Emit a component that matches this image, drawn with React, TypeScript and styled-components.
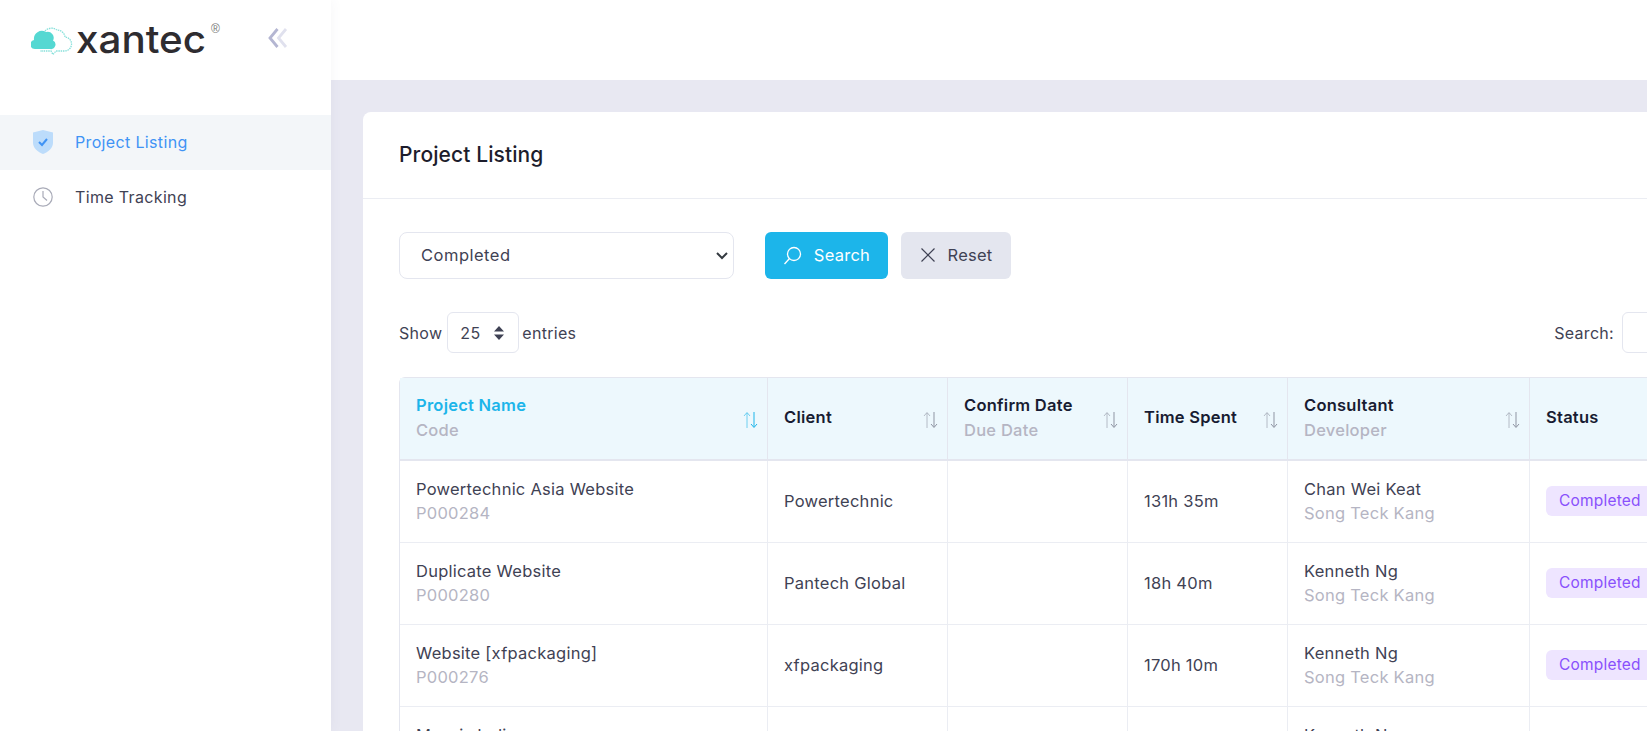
import React from "react";
import styled, { createGlobalStyle } from "styled-components";

const Global = createGlobalStyle`
  html, body { margin: 0; padding: 0; height: 100%; overflow: hidden; }
  body { font-family: Inter, "Liberation Sans", sans-serif; color: #3f4254; background: #e8e8f2; }
  * { box-sizing: border-box; }
`;

const Page = styled.div`display: flex; width: 1647px; height: 731px; overflow: hidden;`;
const Sidebar = styled.aside`flex: 0 0 331px; background: #fff; box-shadow: 0 0 12px rgba(80,80,120,.06); z-index: 1;`;
const Brand = styled.div`height: 115px; padding: 20px 0 0 31px; display: flex; align-items: flex-start;`;
const Collapse = styled.div`margin: 8px 0 0 42px; display: flex;`;
const NavItem = styled.div<{ $active?: boolean }>`
  height: 55px; display: flex; align-items: center; padding: 0 0 1px 33px; gap: 22px;
  background: ${p => (p.$active ? "#f3f6f9" : "transparent")};
  color: ${p => (p.$active ? "#3f93f5" : "#3f4254")};
  font-size: 16px; letter-spacing: .35px;
`;
const Main = styled.main`flex: 1; min-width: 0; display: flex; flex-direction: column;`;
const TopBar = styled.div`height: 80px; flex: none; background: #fff;`;
const Content = styled.div`padding: 32px 0 0 32px;`;
const Card = styled.section`width: 1500px; background: #fff; border-radius: 8px 0 0 0;`;
const CardHead = styled.div`height: 87px; display: flex; align-items: center; padding: 0 0 2px 36px; border-bottom: 1px solid #ebedf3; font-size: 21px; font-weight: 500; color: #1d1d2c; letter-spacing: .1px;`;
const CardBody = styled.div`padding: 33px 0 0 36px;`;
const Filters = styled.div`display: flex; align-items: flex-start; gap: 13px;`;
const SelectBox = styled.div`
  width: 335px; height: 47px; margin-right: 18px; border: 1px solid #e4e6ef; border-radius: 8px;
  display: flex; align-items: center; justify-content: space-between; padding: 0 3px 1px 21px; font-size: 16.5px; letter-spacing: .5px;
`;
const Btn = styled.div<{ $primary?: boolean; $w: number }>`
  width: ${p => p.$w}px; height: 47px; border-radius: 6px; display: flex; align-items: center; justify-content: center; gap: 12px;
  padding-bottom: 1px; font-size: 16.5px; letter-spacing: .25px; background: ${p => (p.$primary ? "#1cb5ea" : "#e4e6ef")}; color: ${p => (p.$primary ? "#fff" : "#3f4254")};
`;
const Controls = styled.div`display: flex; align-items: center; height: 41px; margin-top: 33px; font-size: 16px; letter-spacing: .3px; width: 1403px;`;
const Length = styled.div`
  width: 72px; height: 41px; margin: 0 3px 0 5px; border: 1px solid #e4e6ef; border-radius: 6px;
  display: flex; align-items: center; justify-content: space-between; padding: 0 14px 0 12px;
`;
const SearchWrap = styled.div`margin-left: auto; display: flex; align-items: center; gap: 8px;`;
const SearchInput = styled.div`width: 180px; height: 41px; border: 1px solid #e4e6ef; border-radius: 6px;`;
const Table = styled.table`
  margin-top: 24px; width: 1300px; table-layout: fixed; border-collapse: separate; border-spacing: 0;
  border-top: 1px solid #e4e6ef; border-left: 1px solid #e4e6ef; border-radius: 6px 0 0 0; font-size: 16.5px; letter-spacing: .25px;
`;
const Th = styled.th<{ $active?: boolean }>`
  position: relative; height: 83px; padding: 0 32px 2px 16px; text-align: left; vertical-align: middle; background: #edf8fd;
  border-right: 1px solid #e4e6ef; border-bottom: 2px solid #e4e6ef; font-weight: 600; line-height: 25px;
  color: ${p => (p.$active ? "#1cb5ea" : "#181c32")};
`;
const Sub = styled.div`font-weight: 500; color: #b5b5c3;`;
const SortIcon = styled.svg`position: absolute; right: 8px; top: 33px;`;
const Td = styled.td`
  height: 82px; padding: 0 16px 2px; border-right: 1px solid #ebedf3; border-bottom: 1px solid #ebedf3; line-height: 24px; color: #3f4254; white-space: nowrap;
`;
const Code = styled.div`color: #b5b5c3;`;
const Badge = styled.span`
  display: inline-block; background: #eee5ff; color: #8950fc; border-radius: 6px; font-size: 15.5px; letter-spacing: .2px; line-height: 30px; padding: 0 13px;
`;

const Sort = ({ color = "#8f95a3" }: { color?: string }) => (
  <SortIcon width="17" height="18" viewBox="0 0 17 18" fill="none" stroke={color} strokeWidth="1">
    <path d="M5 17V2M2 5l3-3.500L8 5" opacity=".6" />
    <path d="M12 1v15M9 13l3 3.500L15 13" />
  </SortIcon>
);

const rows = [
  ["Powertechnic Asia Website", "P000284", "Powertechnic", "131h 35m", "Chan Wei Keat"],
  ["Duplicate Website", "P000280", "Pantech Global", "18h 40m", "Kenneth Ng"],
  ["Website [xfpackaging]", "P000276", "xfpackaging", "170h 10m", "Kenneth Ng"],
  ["Maxxis Indigo", "P000270", "Maxxis", "96h 20m", "Kenneth Ng"],
];

export default function App() {
  return (
    <Page>
      <Global />
      <Sidebar>
        <Brand>
          <svg width="195" height="42" viewBox="0 0 195 42" fill="none">
            <path d="M14 11a9 9 0 0 1 12-1 8 8 0 0 1 8 7 7 7 0 0 1-1 14H25l-3 3.500-2-3.500H9" stroke="#86e0da" strokeWidth="1.300" strokeDasharray="1.500 .8" />
            <path d="M4 29a4.500 4.500 0 0 1-1-8.900 8 8 0 0 1 12-8 6 6 0 0 1 7 8.500 4.500 4.500 0 0 1-3 8.400Z" fill="#55d8d2" />
            <text x="45" y="33" fontFamily="Inter, sans-serif" fontSize="38" fontWeight="500" fill="#2e2c30" textLength="130" lengthAdjust="spacingAndGlyphs">xantec</text>
            <text x="180" y="13" fontFamily="'Liberation Sans', sans-serif" fontSize="12" fill="#777">®</text>
          </svg>
          <Collapse>
            <svg width="20" height="20" viewBox="0 0 20 20" fill="none" strokeWidth="2.800">
              <path d="M18 1 10.500 10 18 19" stroke="#e0e1ee" />
              <path d="M9.500 1 2 10 9.500 19" stroke="#b4b6d2" />
            </svg>
          </Collapse>
        </Brand>
        <NavItem $active>
          <svg width="20" height="24" viewBox="0 0 20 24">
            <path d="M10 0 20 2.500V13c0 5-5 9-10 11C5 22 0 18 0 13V2.500Z" fill="#bcdcfb" />
            <path d="m6 12 3 3 5-6" stroke="#3f93f5" strokeWidth="2" fill="none" />
          </svg>
          Project Listing
        </NavItem>
        <NavItem>
          <svg width="20" height="20" viewBox="0 0 20 20" fill="none" stroke="#a9abb8" strokeWidth="1.200">
            <circle cx="10" cy="10" r="9.200" />
            <path d="M10 4v6l4 3.500" />
          </svg>
          Time Tracking
        </NavItem>
      </Sidebar>
      <Main>
        <TopBar />
        <Content>
          <Card>
            <CardHead>Project Listing</CardHead>
            <CardBody>
              <Filters>
                <SelectBox>
                  Completed
                  <svg width="16" height="16" viewBox="0 0 16 16" fill="none" stroke="#343a40" strokeWidth="2"><path d="m3 6 5 5 5-5" /></svg>
                </SelectBox>
                <Btn $primary $w={123}>
                  <svg width="19" height="19" viewBox="0 0 19 19" fill="none" stroke="#fff" strokeWidth="1.300"><circle cx="11" cy="8" r="6.500" /><path d="M6.500 12.500 1.500 18" /></svg>
                  Search
                </Btn>
                <Btn $w={110}>
                  <svg width="16" height="16" viewBox="0 0 16 16" fill="none" stroke="#3f4254" strokeWidth="1.200"><path d="m1.500 1.500 13 13M14.500 1.500l-13 13" /></svg>
                  Reset
                </Btn>
              </Filters>
              <Controls>
                Show
                <Length>
                  25
                  <svg width="10" height="14" viewBox="0 0 10 14" fill="#3f4254"><path d="M5 0 10 5.500H0ZM5 14 0 8.500H10Z" /></svg>
                </Length>
                entries
                <SearchWrap>Search:<SearchInput /></SearchWrap>
              </Controls>
              <Table>
                <colgroup>
                  <col width="368" /><col width="180" /><col width="180" /><col width="160" /><col width="242" /><col />
                </colgroup>
                <thead>
                  <tr>
                    <Th $active>Project Name<Sub>Code</Sub><Sort color="#1cb5ea" /></Th>
                    <Th>Client<Sort /></Th>
                    <Th>Confirm Date<Sub>Due Date</Sub><Sort /></Th>
                    <Th>Time Spent<Sort /></Th>
                    <Th>Consultant<Sub>Developer</Sub><Sort /></Th>
                    <Th>Status</Th>
                  </tr>
                </thead>
                <tbody>
                  {rows.map(r => (
                    <tr key={r[1]}>
                      <Td>{r[0]}<Code>{r[1]}</Code></Td>
                      <Td>{r[2]}</Td>
                      <Td />
                      <Td>{r[3]}</Td>
                      <Td>{r[4]}<Code>Song Teck Kang</Code></Td>
                      <Td><Badge>Completed</Badge></Td>
                    </tr>
                  ))}
                </tbody>
              </Table>
            </CardBody>
          </Card>
        </Content>
      </Main>
    </Page>
  );
}
